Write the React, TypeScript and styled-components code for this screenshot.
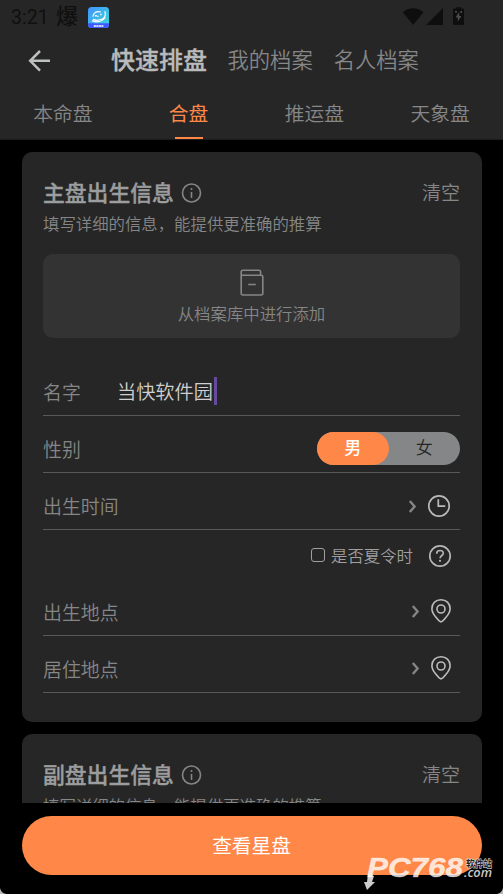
import React from "react";
import styled, { createGlobalStyle } from "styled-components";

const GlobalStyle = createGlobalStyle`
  * { box-sizing: border-box; }
  html, body { margin: 0; background: #000; }
  body {
    font-family: Roboto, "Noto Sans CJK SC", sans-serif;
    font-weight: 350;
    color: #868686;
    overflow: hidden;
  }
`;

const Screen = styled.div`
  position: relative;
  width: 503px;
  height: 894px;
  display: flex;
  flex-direction: column;
  background: #000;
  overflow: hidden;
`;

const Header = styled.header`
  height: 140px;
  flex: none;
  background: #262626;
  border-bottom: 1px solid #1c1c1c;
`;

const StatusBar = styled.div`
  height: 34px;
  display: flex;
  align-items: center;
  padding: 0 37px 0 11px;
  color: #101010;
  font-size: 19.5px;
  font-weight: 400;
`;

const Time = styled.span`
  width: 45px;
  padding-top: 1px;
`;

const Notice = styled.span`
  width: 32px;
  font-size: 22px;
  line-height: 30px;
  font-weight: 500;
`;

const StatusIcons = styled.div`
  margin-left: auto;
  height: 34px;
`;

const NavBar = styled.nav`
  height: 52px;
  display: flex;
  align-items: center;
  padding-left: 27px;
`;

const BackButton = styled.button`
  width: 84px;
  height: 24px;
  padding: 0;
  border: 0;
  background: none;
  text-align: left;
`;

const NavItem = styled.span<{ $active?: boolean }>`
  margin-right: ${(p) => (p.$active ? 20.5 : 21)}px;
  padding-top: ${(p) => (p.$active ? 1 : 2)}px;
  font-size: ${(p) => (p.$active ? 24 : 21.3)}px;
  line-height: 36px;
  font-weight: ${(p) => (p.$active ? 500 : 350)};
  -webkit-text-stroke: ${(p) => (p.$active ? "0.35px" : "0")};
  color: ${(p) => (p.$active ? "#b9babb" : "#868788")};
`;

const Tabs = styled.div`
  height: 53px;
  display: grid;
  grid-template-columns: repeat(4, 1fr);
`;

const Tab = styled.div<{ $active?: boolean }>`
  display: flex;
  flex-direction: column;
  align-items: center;
  justify-content: space-between;
  padding-top: 14px;
  font-size: 19.8px;
  line-height: 30px;
  font-weight: ${(p) => (p.$active ? 400 : 350)};
  color: ${(p) => (p.$active ? "#ff8748" : "#868788")};
  &::after {
    content: "";
    width: 28px;
    height: 2px;
    background: ${(p) => (p.$active ? "#ff8748" : "transparent")};
  }
`;

const Content = styled.main`
  height: 663px;
  flex: none;
  overflow: hidden;
  padding: 12px 21.5px 0;
`;

const Card = styled.section`
  height: 570px;
  margin-bottom: 12px;
  padding: 25px 21.5px 0;
  border-radius: 10px;
  background: #262626;
`;

const CardHead = styled.div`
  height: 32px;
  display: flex;
  align-items: center;
`;

const CardTitle = styled.h2`
  margin: 0 7px 0 0;
  padding-top: 2px;
  font-size: 21.8px;
  line-height: 32px;
  font-weight: 500;
  -webkit-text-stroke: 0.35px;
  color: #9c9d9e;
`;

const ClearButton = styled.span`
  margin-left: auto;
  padding-top: 2px;
  font-size: 19px;
  line-height: 28px;
`;

const Hint = styled.p`
  margin: 3px 0 16px;
  font-size: 16.4px;
  line-height: 26px;
`;

const ArchiveButton = styled.div`
  height: 84px;
  margin-bottom: 21px;
  padding-top: 15px;
  display: flex;
  flex-direction: column;
  align-items: center;
  gap: 6px;
  border-radius: 10px;
  background: #333;
  font-size: 16.4px;
  line-height: 24px;
`;

const Row = styled.div`
  height: 57px;
  padding-top: 10px;
  display: flex;
  align-items: center;
  border-bottom: 1px solid #585959;
  font-size: 18.9px;
  line-height: 28px;
`;

const Label = styled.span`
  width: 74px;
  padding-top: 4px;
  white-space: nowrap;
`;

const NameValue = styled.span`
  display: flex;
  align-items: center;
  font-size: 19.2px;
  color: #cfcfcf;
`;

const NameText = styled.span`
  padding-top: 2px;
`;

const Caret = styled.span`
  width: 3px;
  height: 28px;
  margin: -2px 0 0 1px;
  background: #654a9d;
`;

const Toggle = styled.div`
  width: 143px;
  height: 33px;
  margin: -2px 0 0 auto;
  display: grid;
  grid-template-columns: 1fr 1fr;
  border-radius: 17px;
  background: #858687;
`;

const ToggleOption = styled.span<{ $active?: boolean }>`
  height: 33px;
  border-radius: 17px;
  text-align: center;
  font-size: 17px;
  line-height: 33px;
  font-weight: ${(p) => (p.$active ? 500 : 350)};
  color: ${(p) => (p.$active ? "#fff" : "#262626")};
  background: ${(p) => (p.$active ? "#ff8748" : "transparent")};
`;

const RowIcons = styled.span<{ $inset: number; $lift?: number }>`
  height: 26px;
  margin-left: auto;
  margin-top: ${(p) => -(p.$lift ?? 0)}px;
  margin-right: ${(p) => p.$inset}px;
  display: flex;
  align-items: center;
  gap: 11px;
`;

const DaylightRow = styled.div`
  height: 49px;
  display: flex;
  align-items: center;
  justify-content: flex-end;
  padding: 3px 8px 0 0;
  font-size: 16.4px;
  color: #a0a0a0;
`;

const Checkbox = styled.span`
  width: 14px;
  height: 14px;
  margin: -3px 6px 0 0;
  border: 1.5px solid #a0a0a0;
  border-radius: 3px;
`;

const DaylightText = styled.span`
  margin: -2px 15px 0 0;
`;

const Footer = styled.footer`
  padding: 13px 21.5px 0;
`;

const SubmitButton = styled.button`
  width: 100%;
  height: 59px;
  padding: 1px 0 0;
  border: 0;
  border-radius: 30px;
  background: #ff8748;
  color: #fff;
  font: 400 19.7px/59px Roboto, "Noto Sans CJK SC", sans-serif;
`;

const Watermark = styled.svg`
  position: absolute;
  right: 0;
  bottom: 0;
`;

const Corners = styled.svg`
  position: absolute;
  left: 0;
  bottom: 0;
`;

const Icon = styled.svg`
  display: block;
  flex: none;
  fill: none;
  overflow: visible;
`;

const AppBadge = () => (
  <Icon width="21" height="21" viewBox="0 0 21 21">
    <defs>
      <linearGradient id="badge" x1="0" y1="0" x2="1" y2="1">
        <stop offset="0" stopColor="#4193ff" />
        <stop offset="1" stopColor="#3cdbd6" />
      </linearGradient>
      <clipPath id="badgeClip"><rect width="21" height="21" rx="3.5" /></clipPath>
    </defs>
    <g clipPath="url(#badgeClip)">
      <path fill="url(#badge)" d="M0 0h21v21H0z" />
      <path fill="#3e59ff" d="M0 16.3h21V21H0z" />
      <path stroke="#fff" strokeWidth="1.2" d="M4.8 9.6c.7-4 4-6 8-4.6M16.8 4.2c1.7 4.2-.5 7.4-3.5 8.4M4 13.6c4.2 2 9.5 1.3 13.4-3.2M5 12.4c2.8 1.2 5.5 1.2 8-.2" />
      <path fill="#fff" d="M6.8 8h2v1.5h-2zM9.2 8.7h1.4v1.2H9.2zM12.2 6.8h1.5v1.5h-1.5z" />
      <path stroke="#fff" strokeWidth="1.5" strokeDasharray="2.1 .4" d="M5.8 18.9h9.6" />
    </g>
  </Icon>
);

const StatusGlyphs = () => (
  <Icon width="64" height="34" viewBox="0 0 64 34">
    <g fill="#0e0e0e">
      <path d="M.8 12.3C6.8 6.8 15.4 6.8 21.4 12.3L11.1 25z" />
      <path d="M24 25 41 8v17z" />
      <path d="M51.3 8.6h3V7.2h4.6v1.4h2q1.1 0 1.1 1.2v14q0 1.2-1.2 1.2h-8.6q-1.2 0-1.2-1.2v-14q0-1.2 1.2-1.2z" />
    </g>
    <path fill="#4d4d4d" d="m57.2 12-3.7 5.4h2.3v4.2l3.7-5.5h-2.3zM53 11h2v1.6h-2zM58.5 11h1.5v2h-1.5z" />
  </Icon>
);

const BackArrow = () => (
  <Icon width="24" height="24" viewBox="0 0 24 24" stroke="#bebfc0" strokeWidth="2.5">
    <path d="M23 12.8H3M13 3l-9.8 9.8L13 22.6" />
  </Icon>
);

const InfoIcon = () => (
  <Icon width="21" height="21" viewBox="0 0 21 21" stroke="#868686" strokeWidth="1.6">
    <circle cx="10.5" cy="10" r="9" />
    <path d="M10.5 8.9v6" />
    <circle cx="10.5" cy="6" r="1" fill="#868686" stroke="none" />
  </Icon>
);

const ArchiveIcon = () => (
  <Icon width="24" height="28" viewBox="0 0 24 28" stroke="#868686" strokeWidth="1.6">
    <path d="M1.2 6.2V3q0-1.8 1.8-1.8h16q1.6 0 1.6 1.8v3.2M1.2 6.2h20.1q1.5 0 1.5 1.6v16.5q0 1.7-1.7 1.7H2.9q-1.7 0-1.7-1.7zM8.2 15.5h7.6" />
  </Icon>
);

const Chevron = () => (
  <Icon width="8" height="13" viewBox="0 0 8 13" stroke="#858585" strokeWidth="2.4">
    <path d="m.8 1 4.8 5.5L.8 12" />
  </Icon>
);

const ClockIcon = () => (
  <Icon width="22" height="22" viewBox="0 0 22 22" stroke="#bababa" strokeWidth="1.7">
    <circle cx="11" cy="11" r="10.2" />
    <path d="M10.3 4.2v7h7" />
  </Icon>
);

const HelpIcon = () => (
  <Icon width="24" height="24" viewBox="0 0 24 24" stroke="#b5b5b5" strokeWidth="1.7">
    <circle cx="12" cy="12" r="10.2" />
    <path d="M8.7 9.7c0-4.3 6.6-4.1 6.6-.5 0 2.3-3.2 2.3-3.2 5" />
    <circle cx="12" cy="16.8" r="1.1" fill="#b5b5b5" stroke="none" />
  </Icon>
);

const PinIcon = () => (
  <Icon width="20" height="24" viewBox="0 0 20 24" stroke="#bcbcbc" strokeWidth="1.6">
    <path d="M10 22.9C8.7 22.9 .9 15.2.9 9.7.9 4.2 4.9.8 10 .8s9.1 3.4 9.1 8.9c0 5.5-7.8 13.2-9.1 13.2z" />
    <circle cx="10" cy="10" r="4" />
  </Icon>
);

const SectionTop = ({ title }: { title: string }) => (
  <>
    <CardHead>
      <CardTitle>{title}</CardTitle>
      <InfoIcon />
      <ClearButton>清空</ClearButton>
    </CardHead>
    <Hint>填写详细的信息，能提供更准确的推算</Hint>
  </>
);

export default function App() {
  return (
    <Screen>
      <GlobalStyle />
      <Header>
        <StatusBar>
          <Time>3:21</Time>
          <Notice>爆</Notice>
          <AppBadge />
          <StatusIcons><StatusGlyphs /></StatusIcons>
        </StatusBar>
        <NavBar>
          <BackButton aria-label="返回"><BackArrow /></BackButton>
          <NavItem $active>快速排盘</NavItem>
          <NavItem>我的档案</NavItem>
          <NavItem>名人档案</NavItem>
        </NavBar>
        <Tabs>
          <Tab>本命盘</Tab>
          <Tab $active>合盘</Tab>
          <Tab>推运盘</Tab>
          <Tab>天象盘</Tab>
        </Tabs>
      </Header>
      <Content>
        <Card>
          <SectionTop title="主盘出生信息" />
          <ArchiveButton>
            <ArchiveIcon />
            从档案库中进行添加
          </ArchiveButton>
          <Row>
            <Label>名字</Label>
            <NameValue><NameText>当快软件园</NameText><Caret /></NameValue>
          </Row>
          <Row>
            <Label>性别</Label>
            <Toggle>
              <ToggleOption $active>男</ToggleOption>
              <ToggleOption>女</ToggleOption>
            </Toggle>
          </Row>
          <Row>
            <Label>出生时间</Label>
            <RowIcons $inset={10.5}><Chevron /><ClockIcon /></RowIcons>
          </Row>
          <DaylightRow>
            <Checkbox />
            <DaylightText>是否夏令时</DaylightText>
            <HelpIcon />
          </DaylightRow>
          <Row>
            <Label>出生地点</Label>
            <RowIcons $inset={9} $lift={2}><Chevron /><PinIcon /></RowIcons>
          </Row>
          <Row>
            <Label>居住地点</Label>
            <RowIcons $inset={9} $lift={2}><Chevron /><PinIcon /></RowIcons>
          </Row>
        </Card>
        <Card>
          <SectionTop title="副盘出生信息" />
        </Card>
      </Content>
      <Footer>
        <SubmitButton>查看星盘</SubmitButton>
      </Footer>
      <Corners width="503" height="8" viewBox="0 0 503 8">
        <path fill="#b8b8b8" d="M0 2Q1 7 6 8H0zM503 2Q502 7 497 8h6z" />
      </Corners>
      <Watermark width="143" height="44" viewBox="0 0 143 44">
        <g fill="#fff" fillOpacity=".8">
          <path d="m8 24 6 2-2 6h3l-8 8-3-8h3z" />
          <text x="7" y="27" fontFamily="Liberation Sans" fontSize="27" fontWeight="700" fontStyle="italic" textLength="96" lengthAdjust="spacingAndGlyphs" stroke="#fff" strokeOpacity=".5" strokeWidth=".6">PC768</text>
          <text x="104" y="27" fontFamily="Open Sans" fontSize="12" fontWeight="600" fontStyle="italic" textLength="28" lengthAdjust="spacingAndGlyphs">.com</text>
        </g>
        <text x="106" y="17" fontFamily="Noto Sans CJK SC" fontSize="8.7" fontWeight="700" textLength="26" fill="#222" stroke="#ddd" strokeWidth="1" paintOrder="stroke">软件站</text>
      </Watermark>
    </Screen>
  );
}
